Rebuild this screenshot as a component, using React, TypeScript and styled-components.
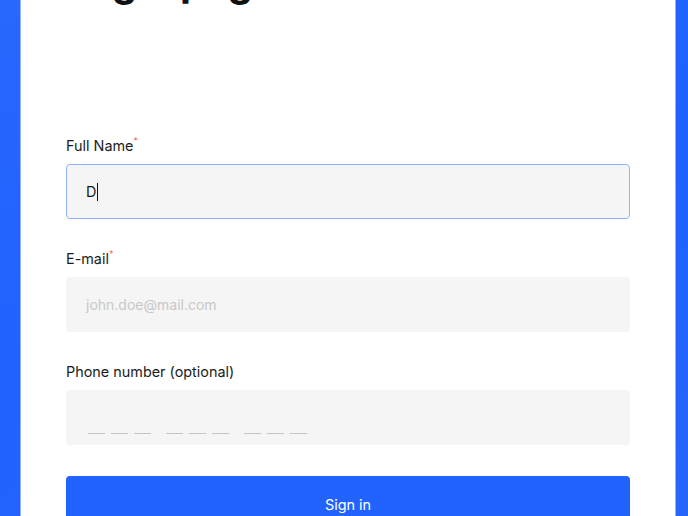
import styled, { createGlobalStyle } from 'styled-components'

const GlobalStyle = createGlobalStyle`
  html, body {
    margin: 0;
    padding: 0;
    overflow: hidden;
  }
  body {
    font-family: Inter, "Noto Sans", sans-serif;
    color: #1c1c1c;
  }
`

interface Field {
  label: string
  required?: boolean
  kind: 'filled' | 'empty' | 'phone'
  value?: string
  placeholder?: string
}

const fields: Field[] = [
  { label: 'Full Name', required: true, kind: 'filled', value: 'D' },
  { label: 'E-mail', required: true, kind: 'empty', placeholder: 'john.doe@mail.com' },
  { label: 'Phone number (optional)', kind: 'phone' }
]

const phoneGroups = [3, 3, 3]

export default function App() {
  return (
    <Page>
      <GlobalStyle />
      <Card>
        <Title>Login page</Title>
        <Form onSubmit={(e) => e.preventDefault()}>
          {fields.map((field) => (
            <FieldBlock key={field.label}>
              <Label>
                {field.label}
                {field.required && <Star>*</Star>}
              </Label>
              <InputBox $focused={field.kind === 'filled'}>
                {field.kind === 'filled' && (
                  <>
                    <Value>{field.value}</Value>
                    <Caret />
                  </>
                )}
                {field.kind === 'empty' && <Placeholder>{field.placeholder}</Placeholder>}
                {field.kind === 'phone' && (
                  <Mask>
                    {phoneGroups.map((n, i) => (
                      <DashGroup key={i}>
                        {Array.from({ length: n }).map((_, j) => (
                          <Dash key={j} />
                        ))}
                      </DashGroup>
                    ))}
                  </Mask>
                )}
              </InputBox>
            </FieldBlock>
          ))}
          <SubmitButton type="submit">Sign in</SubmitButton>
        </Form>
      </Card>
    </Page>
  )
}

const Page = styled.div`
  min-height: 100vh;
  box-sizing: border-box;
  padding-left: 21px;
  background:
    linear-gradient(118deg, rgba(255, 255, 255, 0) 0%, rgba(255, 255, 255, 0) 38%, rgba(255, 255, 255, 0.04) 38.5%, rgba(255, 255, 255, 0.04) 60%, rgba(255, 255, 255, 0) 60.5%),
    linear-gradient(160deg, #2a68fd 0%, #1f62ff 50%, #2866fa 100%);
`

const Card = styled.div`
  width: 654px;
  box-sizing: border-box;
  min-height: 600px;
  margin-top: -42px;
  padding: 0 45px;
  background: #ffffff;
  box-shadow: 0 0 0 1px rgba(255, 255, 255, 0.5);
`

const Title = styled.h1`
  margin: 0 0 131px;
  font-size: 40px;
  line-height: 48px;
  font-weight: 700;
  letter-spacing: -0.6px;
  color: #111111;
`

const Form = styled.form`
  display: flex;
  flex-direction: column;
  gap: 31px;
`

const FieldBlock = styled.div`
  display: flex;
  flex-direction: column;
  gap: 9px;
`

const Label = styled.label`
  font-size: 14.4px;
  line-height: 18px;
  color: #1c1c1c;
`

const Star = styled.sup`
  color: #ff5a5a;
  font-size: 9px;
  line-height: 0;
  margin-left: 0;
  vertical-align: 7px;
`

const InputBox = styled.div<{ $focused?: boolean }>`
  box-sizing: border-box;
  height: 55px;
  display: flex;
  align-items: center;
  padding: 0 19px;
  background: #f5f5f5;
  border: 1.5px solid ${(p) => (p.$focused ? '#8fb3ff' : '#f5f5f5')};
  border-radius: 4px;
  font-size: 14.4px;
`

const Value = styled.span`
  color: #1a1a1a;
`

const Caret = styled.span`
  width: 1px;
  height: 18px;
  margin-left: 1px;
  background: #111111;
`

const Placeholder = styled.span`
  color: #c8c8c8;
  font-size: 14px;
`

const Mask = styled.div`
  align-self: flex-end;
  margin-bottom: 10px;
  margin-left: 2px;
  display: flex;
  gap: 15px;
`

const DashGroup = styled.div`
  display: flex;
  gap: 6px;
`

const Dash = styled.span`
  width: 17px;
  height: 1px;
  background: #c4c4c4;
`

const SubmitButton = styled.button`
  height: 56px;
  border: 0;
  border-radius: 4px;
  background: #2263ff;
  color: #ffffff;
  font-family: Inter, "Noto Sans", sans-serif;
  font-size: 14.4px;
  padding: 0;
  cursor: pointer;
`
